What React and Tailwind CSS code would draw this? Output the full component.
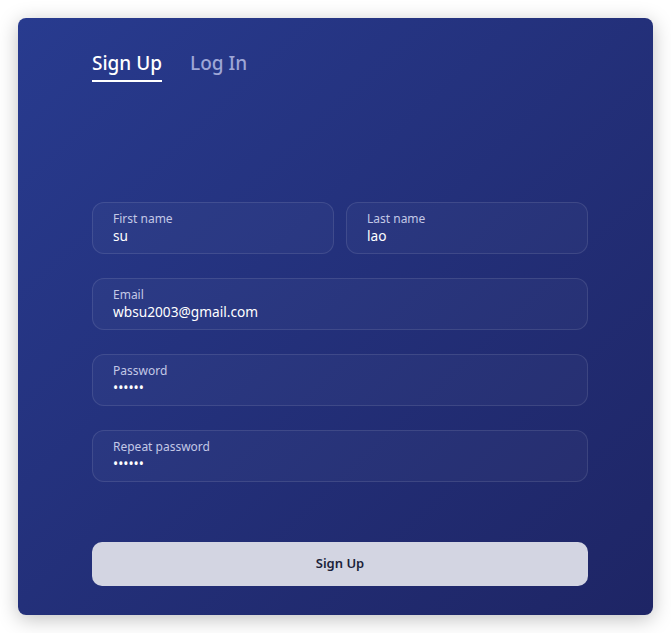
import React from 'react'

function Field({ label, value, className = '' }) {
    return (
        <div className={`flex h-[52px] flex-col justify-center rounded-xl border border-white/10 bg-white/[0.03] px-5 ${className}`}>
            <span className="text-[12px] leading-[16px] text-[#c3c8e6]">{label}</span>
            <span className="text-[13.7px] leading-[18px] text-white">{value}</span>
        </div>
    )
}

export default function App() {
    return (
        <div className="min-h-[633px] w-full bg-white p-[18px] font-['Noto_Sans',sans-serif]">
            <div className="flex h-[597px] flex-col rounded-lg bg-gradient-to-br from-[#283b8f] to-[#1e2565] pl-[74px] pr-[65px] pt-[31px] shadow-[0_4px_20px_rgba(0,0,0,0.25)]">
                <div className="flex gap-7">
                    <span className="border-b-2 border-white pb-[3px] text-[19px] font-medium leading-[28px] text-white">Sign Up</span>
                    <span className="text-[19px] font-medium leading-[28px] text-[#9ea6d6]">Log In</span>
                </div>

                <div className="mt-[120px] flex flex-col gap-6">
                    <div className="grid grid-cols-2 gap-3">
                        <Field label="First name" value="su" />
                        <Field label="Last name" value="lao" />
                    </div>
                    <Field label="Email" value="wbsu2003@gmail.com" />
                    <Field label="Password" value="••••••" />
                    <Field label="Repeat password" value="••••••" />
                </div>

                <button className="mt-[60px] h-[44px] w-full rounded-[10px] bg-[#d3d5e2] text-[13px] font-semibold text-[#1b1f3a]">
                    Sign Up
                </button>
            </div>
        </div>
    )
}
